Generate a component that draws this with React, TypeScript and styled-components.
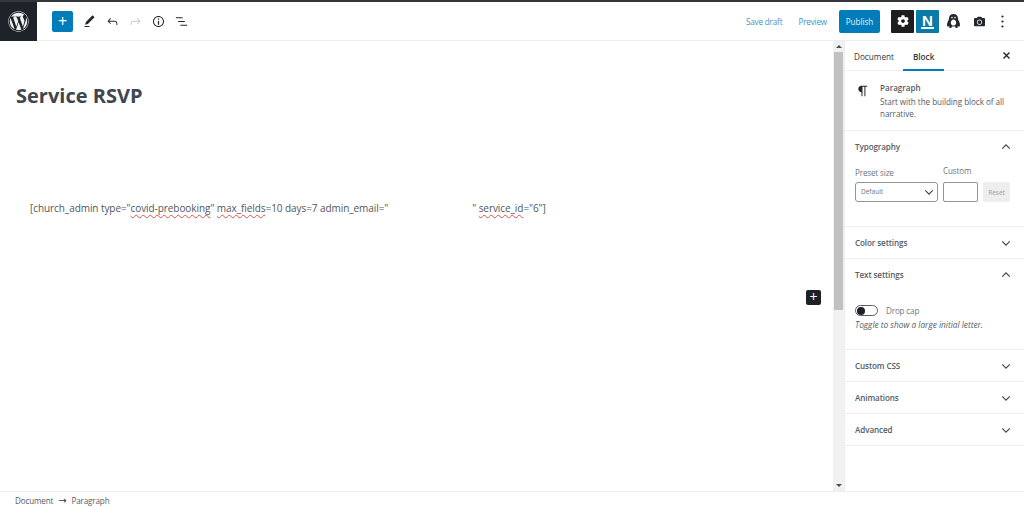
import React from "react";
import styled, { createGlobalStyle } from "styled-components";
import { FaWordpress, FaCog, FaCamera } from "react-icons/fa";

const GlobalStyle = createGlobalStyle`
  html, body {
    margin: 0;
    padding: 0;
    background: #fff;
    overflow: hidden;
  }
  * {
    box-sizing: border-box;
  }
  body {
    font-family: "Open Sans", "Noto Sans", sans-serif;
    color: #555d66;
  }
`;

const PENCIL = "M20.1 5.1L16.9 2 6.2 12.7l-1.3 4.4 4.5-1.3L20.1 5.1zM4 20.8h8v-1.5H4v1.5z";
const UNDO = "M18.3 11.7c-.6-.6-1.4-.9-2.3-.9H6.7l2.9-3.3-1.1-1-4.5 5L8.5 16l1-1-2.7-2.7H16c.5 0 .9.2 1.3.5 1 1 1 3.4 1 4.5v.3h1.5v-.2c0-1.5 0-4.3-1.5-5.7z";
const REDO = "M15.6 6.5l-1.1 1 2.9 3.3H8c-.9 0-1.7.3-2.3.9-1.4 1.5-1.4 4.2-1.4 5.7v.2h1.5v-.3c0-1.1 0-3.5 1-4.5.3-.3.7-.5 1.3-.5h9.2L14.5 15l1.1 1.1 4.6-4.6-4.6-5z";
const INFO = "M12 3.2c-4.8 0-8.8 3.9-8.8 8.8 0 4.8 3.9 8.8 8.8 8.8 4.8 0 8.8-3.9 8.8-8.8 0-4.8-4-8.8-8.8-8.8zm0 16c-4 0-7.2-3.3-7.2-7.2C4.8 8 8 4.8 12 4.8s7.2 3.3 7.2 7.2c0 4-3.2 7.2-7.2 7.2zM11 17h2v-6h-2v6zm0-8h2V7h-2v2z";
const LIST = "M13.8 5.2H3v1.5h10.8V5.2zm-3.6 12v1.5H21v-1.5H10.2zm7.2-6H6.6v1.5h10.8v-1.5z";
const PARAGRAPH = "M18.3 4H9.9v-.1l-.9.2c-2.3.4-4 2.4-4 4.8s1.7 4.4 4 4.8l.7.1V20h1.5V5.5h2.9V20h1.5V5.5h2.700V4z";

const Glyph = ({ d, size = 15 }: { d: string; size?: number }) => (
  <svg width={size} height={size} viewBox="0 0 24 24" fill="currentColor">
    <path d={d} />
  </svg>
);

const Chevron = ({ up }: { up?: boolean }) => (
  <svg width="10" height="10" viewBox="0 0 12 12" fill="none" stroke="#40464d" strokeWidth="1.4">
    <path d={up ? "M1.5 8L6 3.5 10.5 8" : "M1.5 4L6 8.5 10.5 4"} />
  </svg>
);

const Page = styled.div`
  width: 1024px;
  height: 508px;
  display: flex;
  flex-direction: column;
  border-top: 2px solid #32373c;
`;

const Header = styled.header`
  height: 39px;
  flex: none;
  display: flex;
  align-items: center;
  border-bottom: 1px solid #eceef0;
`;

const Logo = styled.div`
  width: 37px;
  height: 39px;
  background: #1e2329;
  color: #eef0f2;
  display: flex;
  align-items: center;
  justify-content: center;
  margin-bottom: -1px;
`;

const AddButton = styled.button`
  width: 21px;
  height: 21px;
  margin: 0 5px 0 15px;
  padding: 0;
  border: 0;
  border-radius: 2px;
  background: #007cba;
  color: #fff;
  font: 400 16px/20px "Open Sans", sans-serif;
`;

const Tool = styled.span<{ $muted?: boolean; $gap?: number }>`
  width: 23px;
  height: 23px;
  margin-right: ${(p) => p.$gap ?? 0}px;
  display: flex;
  align-items: center;
  justify-content: center;
  color: ${(p) => (p.$muted ? "#c5c9cd" : "#23282d")};
`;

const HeaderEnd = styled.div`
  margin-left: auto;
  display: flex;
  align-items: center;
  padding-right: 10px;
`;

const TextLink = styled.span<{ $gap: number }>`
  color: #3f92c4;
  font-size: 8.1px;
  letter-spacing: -0.15px;
  margin-right: ${(p) => p.$gap}px;
`;

const PublishButton = styled.span`
  width: 41px;
  height: 23px;
  margin-right: 11px;
  border-radius: 2px;
  background: #007cba;
  color: #e6f2f8;
  font-size: 8.1px;
  display: flex;
  align-items: center;
  justify-content: center;
`;

const SquareButton = styled.span<{ $bg: string; $gap: number }>`
  width: 23px;
  height: 23px;
  margin-right: ${(p) => p.$gap}px;
  border-radius: 1px;
  background: ${(p) => p.$bg};
  color: #fff;
  display: flex;
  align-items: center;
  justify-content: center;
`;

const NLetter = styled.span`
  font: 700 15px/13px "Liberation Sans", sans-serif;
  border-bottom: 2px solid #fff;
  padding: 0 1px;
`;

const Body = styled.div`
  flex: 1;
  min-height: 0;
  display: flex;
`;

const Editor = styled.main`
  position: relative;
  flex: 1;
  padding: 43px 16px 0;
`;

const Title = styled.h1`
  margin: 0;
  font-size: 20px;
  line-height: 24px;
  font-weight: 700;
  color: #40464d;
`;

const Shortcode = styled.p`
  margin: 92px 0 0 14px;
  font-size: 10px;
  letter-spacing: -0.07px;
  line-height: 16px;
  color: #50565c;
  white-space: pre;
`;

const Misspelled = styled.span`
  text-decoration: underline wavy #d9534f 1px;
  text-underline-offset: 2px;
`;

const Redacted = styled.span`
  display: inline-block;
  width: 84px;
`;

const Inserter = styled.span`
  position: absolute;
  left: 806px;
  top: 249px;
  width: 15px;
  height: 15px;
  border-radius: 2px;
  background: #1e2125;
  color: #fff;
  font-size: 14px;
  line-height: 14px;
  text-align: center;
`;

const Scrollbar = styled.div`
  width: 11px;
  flex: none;
  background: #f1f1f1;
  display: flex;
  flex-direction: column;
  align-items: stretch;
`;

const ScrollArrow = styled.div<{ $down?: boolean }>`
  height: 11px;
  flex: none;
  display: flex;
  align-items: center;
  justify-content: center;
  &::before {
    content: "";
    border-left: 3px solid transparent;
    border-right: 3px solid transparent;
    border-${(p) => (p.$down ? "top" : "bottom")}: 3px solid #505050;
  }
`;

const ScrollThumb = styled.div`
  height: 258px;
  margin: 0 1px;
  background: #c1c1c1;
`;

const ScrollSpace = styled.div`
  flex: 1;
`;

const Sidebar = styled.aside`
  width: 180px;
  flex: none;
  border-left: 1px solid #eceef0;
`;

const Tabs = styled.div`
  height: 30px;
  display: flex;
  align-items: stretch;
  border-bottom: 1px solid #eceef0;
  padding-right: 13px;
`;

const Tab = styled.span<{ $active?: boolean }>`
  padding: 2px ${(p) => (p.$active ? 10 : 9)}px 0;
  font-size: 8.2px;
  font-weight: ${(p) => (p.$active ? 600 : 500)};
  color: #32373c;
  display: flex;
  align-items: center;
  margin-bottom: -1px;
  border-bottom: 2px solid ${(p) => (p.$active ? "#007cba" : "transparent")};
`;

const CloseMark = styled.span`
  margin-left: auto;
  align-self: center;
  display: flex;
  color: #23282d;
`;

const BlockCard = styled.div`
  height: 60px;
  padding: 11px 10px 0 10px;
  display: flex;
  border-bottom: 1px solid #eceef0;
`;

const CardIcon = styled.span`
  width: 25px;
  flex: none;
  color: #23282d;
`;

const CardTitle = styled.div`
  font-size: 8.1px;
  line-height: 12px;
  font-weight: 600;
  color: #555d66;
`;

const CardText = styled.div`
  margin-top: 2px;
  font-size: 8.1px;
  letter-spacing: -0.05px;
  line-height: 12px;
  color: #555d66;
`;

const Panel = styled.section<{ $height: number }>`
  height: ${(p) => p.$height}px;
  border-bottom: 1px solid #eceef0;
  padding: 0 13px 0 10px;
`;

const PanelHead = styled.div`
  height: 32px;
  padding-bottom: 1px;
  display: flex;
  align-items: center;
  justify-content: space-between;
  font-size: 8.1px;
  letter-spacing: -0.1px;
  font-weight: 600;
  color: #555d66;
`;

const SizeRow = styled.div`
  display: flex;
  align-items: flex-end;
  gap: 5px;
  margin-top: 2px;
`;

const Field = styled.div`
  display: flex;
  flex-direction: column;
  gap: 3px;
  font-size: 8.1px;
  letter-spacing: -0.15px;
  line-height: 12px;
  color: #6c7781;
`;

const CustomLabel = styled.span`
  margin-bottom: 2px;
`;

const SizeSelect = styled.div`
  width: 83px;
  height: 20px;
  border: 1px solid #8d96a0;
  border-radius: 3px;
  padding: 0 3px 0 5px;
  display: flex;
  align-items: center;
  justify-content: space-between;
  font-size: 6.5px;
  letter-spacing: 0;
  color: #6c7781;
`;

const SizeInput = styled.div`
  width: 35px;
  height: 20px;
  border: 1px solid #8d96a0;
  border-radius: 2px;
`;

const ResetButton = styled.div`
  width: 27px;
  height: 20px;
  border-radius: 2px;
  background: #eeeeee;
  color: #9aa0a6;
  font-size: 6.5px;
  display: flex;
  align-items: center;
  justify-content: center;
`;

const ToggleRow = styled.div`
  margin-top: 14px;
  display: flex;
  align-items: center;
  gap: 8px;
  font-size: 8.1px;
  letter-spacing: -0.15px;
  color: #6c7781;
`;

const Toggle = styled.span`
  width: 23px;
  height: 11px;
  border: 1px solid #555d66;
  border-radius: 6px;
  padding: 1px;
  display: flex;
  align-items: center;
  &::before {
    content: "";
    width: 8px;
    height: 8px;
    border-radius: 50%;
    background: #1e2125;
  }
`;

const HelpText = styled.div`
  margin-top: 3px;
  font-size: 8.3px;
  line-height: 12px;
  font-style: italic;
  color: #555d66;
`;

const Footer = styled.footer`
  height: 17px;
  flex: none;
  border-top: 1px solid #eceef0;
  padding: 1px 0 0 15px;
  display: flex;
  align-items: center;
  gap: 5px;
  font-size: 8.1px;
  letter-spacing: -0.15px;
  color: #555d66;
`;

const CrumbArrow = styled.span`
  font: 400 10px/10px "DejaVu Sans", sans-serif;
  color: #32373c;
`;

const CollapsedPanel = ({ title }: { title: string }) => (
  <Panel $height={32}>
    <PanelHead>
      {title}
      <Chevron />
    </PanelHead>
  </Panel>
);

const App = () => {
  return (
    <Page>
      <GlobalStyle />
      <Header>
        <Logo>
          <FaWordpress size={21} />
        </Logo>
        <AddButton>+</AddButton>
        <Tool>
          <Glyph d={PENCIL} />
        </Tool>
        <Tool>
          <Glyph d={UNDO} />
        </Tool>
        <Tool $muted>
          <Glyph d={REDO} />
        </Tool>
        <Tool>
          <Glyph d={INFO} />
        </Tool>
        <Tool>
          <Glyph d={LIST} />
        </Tool>
        <HeaderEnd>
          <TextLink $gap={16}>Save draft</TextLink>
          <TextLink $gap={12}>Preview</TextLink>
          <PublishButton>Publish</PublishButton>
          <SquareButton $bg="#1e1e1e" $gap={2}>
            <FaCog size={12} />
          </SquareButton>
          <SquareButton $bg="#0a7aa8" $gap={3}>
            <NLetter>N</NLetter>
          </SquareButton>
          <Tool $gap={3}>
            <svg width="15" height="17" viewBox="0 0 15 17" fill="#23282d">
              <path d="M7.5 1C4.6 1 3 3 3 5.5c0 1-.4 1.7-1 2.8C1.2 9.8.8 11.5 1.2 13c.2.8 1 .8 1.6.3l.4-.4.3 2.100h1.800l.5-1.500h3.400l.5 1.500h1.800l.3-2.100.4.400c.6.500 1.400.5 1.600-.3.400-1.500 0-3.200-.8-4.700-.6-1.100-1-1.800-1-2.800C12 3 10.400 1 7.500 1zM7.500 6.500c1.500 0 2.700 1.300 2.700 3.200s-1.200 2.800-2.700 2.800-2.700-.9-2.700-2.800 1.200-3.200 2.700-3.200z" />
              <circle cx="6" cy="4.600" r=".8" fill="#fff" />
              <circle cx="9" cy="4.600" r=".8" fill="#fff" />
            </svg>
          </Tool>
          <Tool>
            <FaCamera size={11} />
          </Tool>
          <Tool>
            <svg width="3" height="13" viewBox="0 0 3 13" fill="#23282d">
              <circle cx="1.500" cy="1.500" r="1.100" />
              <circle cx="1.500" cy="6.500" r="1.100" />
              <circle cx="1.500" cy="11.500" r="1.100" />
            </svg>
          </Tool>
        </HeaderEnd>
      </Header>
      <Body>
        <Editor>
          <Title>Service RSVP</Title>
          <Shortcode>
            [church_admin type="<Misspelled>covid-prebooking</Misspelled>" <Misspelled>max_fields</Misspelled>=10 days=7 admin_email="
            <Redacted />" <Misspelled>service_id</Misspelled>="6"]
          </Shortcode>
          <Inserter>+</Inserter>
        </Editor>
        <Scrollbar>
          <ScrollArrow />
          <ScrollThumb />
          <ScrollSpace />
          <ScrollArrow $down />
        </Scrollbar>
        <Sidebar>
          <Tabs>
            <Tab>Document</Tab>
            <Tab $active>Block</Tab>
            <CloseMark>
              <svg width="9" height="9" viewBox="0 0 9 9" stroke="#23282d" strokeWidth="1.400">
                <path d="M1.500 1.500l6 6M7.500 1.500l-6 6" />
              </svg>
            </CloseMark>
          </Tabs>
          <BlockCard>
            <CardIcon>
              <Glyph d={PARAGRAPH} size={16} />
            </CardIcon>
            <div>
              <CardTitle>Paragraph</CardTitle>
              <CardText>
                Start with the building block of all
                <br />
                narrative.
              </CardText>
            </div>
          </BlockCard>
          <Panel $height={96}>
            <PanelHead>
              Typography
              <Chevron up />
            </PanelHead>
            <SizeRow>
              <Field>
                Preset size
                <SizeSelect>
                  Default
                  <Chevron />
                </SizeSelect>
              </Field>
              <Field>
                <CustomLabel>Custom</CustomLabel>
                <SizeInput />
              </Field>
              <ResetButton>Reset</ResetButton>
            </SizeRow>
          </Panel>
          <CollapsedPanel title="Color settings" />
          <Panel $height={91}>
            <PanelHead>
              Text settings
              <Chevron up />
            </PanelHead>
            <ToggleRow>
              <Toggle />
              Drop cap
            </ToggleRow>
            <HelpText>Toggle to show a large initial letter.</HelpText>
          </Panel>
          <CollapsedPanel title="Custom CSS" />
          <CollapsedPanel title="Animations" />
          <CollapsedPanel title="Advanced" />
        </Sidebar>
      </Body>
      <Footer>
        <span>Document</span>
        <CrumbArrow>→</CrumbArrow>
        <span>Paragraph</span>
      </Footer>
    </Page>
  );
};

export default App;
